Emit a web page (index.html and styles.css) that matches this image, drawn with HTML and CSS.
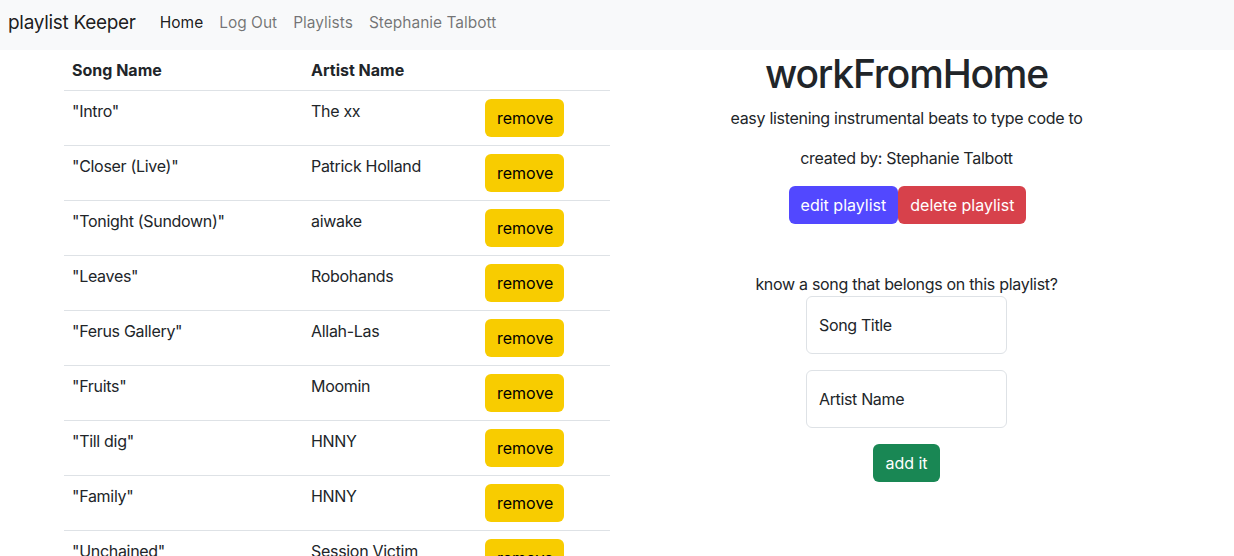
FILE: index.html
```html
<!DOCTYPE html>
<html lang="en">
<head>
<meta charset="utf-8">
<title>playlist Keeper</title>
<link rel="stylesheet" href="styles.css">
</head>
<body>
<nav class="navbar">
  <a class="brand" href="#">playlist Keeper</a>
  <ul class="nav-links">
    <li><a class="active" href="#">Home</a></li>
    <li><a href="#">Log Out</a></li>
    <li><a href="#">Playlists</a></li>
    <li><a href="#">Stephanie Talbott</a></li>
  </ul>
</nav>
<main class="page">
  <section class="songs">
    <table class="song-table">
      <thead>
        <tr><th class="c-song">Song Name</th><th class="c-artist">Artist Name</th><th class="c-act"></th></tr>
      </thead>
      <tbody>
        <tr><td>"Intro"</td><td>The xx</td><td><button class="btn btn-remove">remove</button></td></tr>
        <tr><td>"Closer (Live)"</td><td>Patrick Holland</td><td><button class="btn btn-remove">remove</button></td></tr>
        <tr><td>"Tonight (Sundown)"</td><td>aiwake</td><td><button class="btn btn-remove">remove</button></td></tr>
        <tr><td>"Leaves"</td><td>Robohands</td><td><button class="btn btn-remove">remove</button></td></tr>
        <tr><td>"Ferus Gallery"</td><td>Allah-Las</td><td><button class="btn btn-remove">remove</button></td></tr>
        <tr><td>"Fruits"</td><td>Moomin</td><td><button class="btn btn-remove">remove</button></td></tr>
        <tr><td>"Till dig"</td><td>HNNY</td><td><button class="btn btn-remove">remove</button></td></tr>
        <tr><td>"Family"</td><td>HNNY</td><td><button class="btn btn-remove">remove</button></td></tr>
        <tr><td>"Unchained"</td><td>Session Victim</td><td><button class="btn btn-remove">remove</button></td></tr>
      </tbody>
    </table>
  </section>
  <section class="detail">
    <h1 class="title">workFromHome</h1>
    <p class="desc">easy listening instrumental beats to type code to</p>
    <p class="creator">created by: Stephanie Talbott</p>
    <div class="actions">
      <button class="btn btn-edit">edit playlist</button><button class="btn btn-delete">delete playlist</button>
    </div>
    <form class="add-form">
      <p class="prompt">know a song that belongs on this playlist?</p>
      <input class="field" type="text" placeholder="Song Title">
      <input class="field" type="text" placeholder="Artist Name">
      <button class="btn btn-add" type="button">add it</button>
    </form>
  </section>
</main>
</body>
</html>
```
FILE: styles.css
```css
* { box-sizing: border-box; }
html, body { margin: 0; padding: 0; }
body {
  font-family: Inter, "Noto Sans", Roboto, "Liberation Sans", sans-serif;
  font-size: 16px;
  line-height: 24px;
  color: #212529;
  background: #fff;
  overflow: hidden;
  height: 556px;
}
a { text-decoration: none; }

.navbar {
  display: flex;
  align-items: flex-start;
  height: 50px;
  background: #f8f9fa;
  padding: 9px 8px 0;
}
.brand {
  font-size: 19px;
  letter-spacing: -0.3px;
  color: rgba(0,0,0,.9);
  margin-right: 24px;
  line-height: 28px;
}
.nav-links {
  display: flex;
  list-style: none;
  margin: 0;
  padding: 0;
}
.nav-links a {
  display: block;
  padding: 0 8px;
  line-height: 28px;
  color: rgba(0,0,0,.55);
  font-size: 15.5px;
}
.nav-links li:first-child a { padding-left: 0; }
.nav-links a.active { color: rgba(0,0,0,.9); }

.page {
  display: flex;
  padding-left: 64px;
}
.songs { width: 546px; flex: none; }
.song-table {
  width: 546px;
  border-collapse: collapse;
  table-layout: fixed;
}
.c-song { width: 239px; }
.c-artist { width: 174px; }
.c-act { width: 133px; }
.song-table th, .song-table td {
  padding: 8px;
  text-align: left;
  vertical-align: top;
  border-bottom: 1px solid #dee2e6;
  white-space: nowrap;
}
.song-table td { letter-spacing: -0.3px; }
.song-table th { font-weight: 700; }

.btn {
  display: inline-block;
  font-family: inherit;
  font-size: 16px;
  line-height: 24px;
  letter-spacing: 0;
  padding: 7px 12px;
  border: 0;
  border-radius: 6px;
  cursor: pointer;
}
.btn-remove { background: #f8cc00; color: #000; width: 79px; }

.detail {
  width: 593px;
  flex: none;
  text-align: center;
  display: flex;
  flex-direction: column;
  align-items: center;
}
.title {
  font-size: 39px;
  font-weight: 500;
  letter-spacing: -1.2px;
  line-height: 48px;
  margin: 0 0 8px;
}
.desc, .creator, .prompt { letter-spacing: -0.3px; }
.desc, .creator { margin: 0 0 16px; }
.actions { display: flex; margin-left: 2px; }
.btn-edit { background: #5248ff; color: #fff; }
.btn-delete { background: #d7414b; color: #fff; }

.add-form {
  margin-top: 48px;
  display: flex;
  flex-direction: column;
  align-items: center;
}
.prompt { margin: 0; }
.field {
  width: 201px;
  height: 58px;
  padding: 0 12px;
  font-family: inherit;
  font-size: 16px;
  letter-spacing: -0.35px;
  color: #212529;
  border: 1px solid #dee2e6;
  border-radius: 6px;
  margin-bottom: 16px;
  outline: none;
}
.field::placeholder { color: #212529; opacity: 1; }
.btn-add { background: #198754; color: #fff; }
```
